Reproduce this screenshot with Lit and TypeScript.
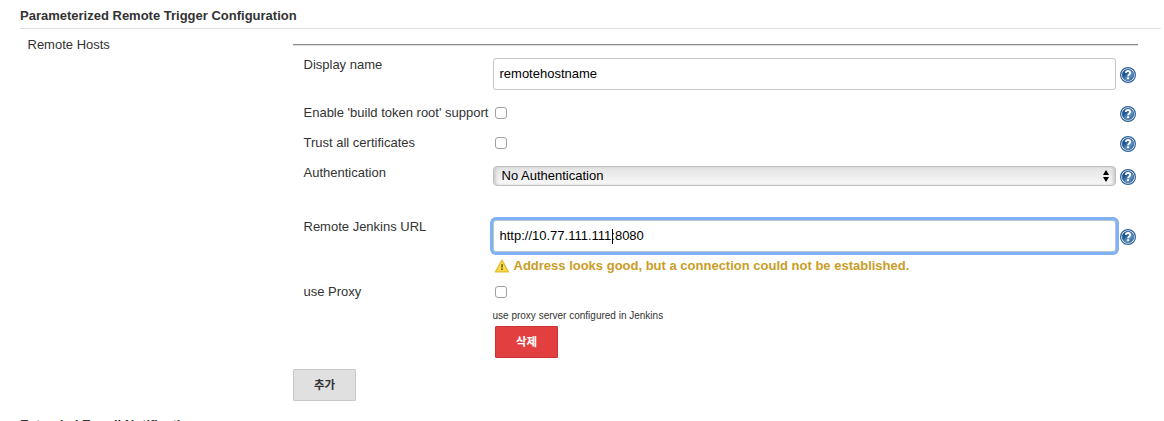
import { LitElement, html, css } from "lit";
import { customElement, property } from "lit/decorators.js";

@customElement("help-icon")
export class HelpIcon extends LitElement {
  static styles = css`
    :host { display: block; width: 16px; height: 16px; }
    svg { display: block; }
  `;
  render() {
    return html`<svg width="16" height="16" viewBox="0 0 16 16" aria-label="Help">
      <defs>
        <linearGradient id="g" x1="0" y1="0" x2="1" y2="1">
          <stop offset="0" stop-color="#0d427c" />
          <stop offset=".35" stop-color="#1f5a94" />
          <stop offset=".6" stop-color="#6595c2" />
          <stop offset="1" stop-color="#1f568f" />
        </linearGradient>
      </defs>
      <circle cx="8" cy="8" r="7.400" fill="#fff" stroke="#2c629b" stroke-width="1.200" />
      <circle cx="8" cy="8" r="5.800" fill="url(#g)" stroke="#1b5089" stroke-width=".6" />
      <path d="M5.700 5.900C5.900 4.500 6.800 4 8 4c1.400 0 2.200.7 2.200 1.900C10.200 7.400 8.100 7.400 8.100 9.300" fill="none" stroke="#fff" stroke-width="1.800" />
      <rect x="7.100" y="10.300" width="2" height="1.900" fill="#fff" />
    </svg>`;
  }
}

@customElement("form-row")
export class FormRow extends LitElement {
  @property() label = "";
  @property({ type: Boolean }) help = false;
  static styles = css`
    :host { display: grid; grid-template-columns: 190px 624px 16px; column-gap: 0; }
    .label { padding-left: 0.5px; line-height: 18px; white-space: nowrap; }
    .help { padding: var(--help-top, 2px) 0 0 3px; }
  `;
  render() {
    return html`
      <div class="label">${this.label}</div>
      <div><slot></slot></div>
      <div class="help">${this.help ? html`<help-icon></help-icon>` : null}</div>
    `;
  }
}

@customElement("app-root")
export class AppRoot extends LitElement {
  static styles = css`
    :host {
      display: block; height: 421px; overflow: hidden; background: #fff; color: #333;
      font: 13px/18px "Liberation Sans", Arial, "Noto Sans CJK KR", sans-serif;
    }
    * { box-sizing: border-box; }
    .page { padding: 7px 3px 0 20px; }
    .heading { height: 22px; font-size: 13px; font-weight: bold; line-height: 18px; border-bottom: 1px solid #ddd; white-space: nowrap; }
    .section { display: grid; grid-template-columns: 273px 845px; height: 387px; }
    .section-label { padding: 7px 0 0 7.5px; }
    .host-list { padding-top: 15px; }
    .rule { height: 2px; background: linear-gradient(#8c8c8c 50%, #ddd 50%); }
    .host { padding: 10px 0 0 10px; }
    .row-name { height: 48px; --help-top: 11px; }
    .row-check { height: 30px; }
    .row-auth { height: 54px; --help-top: 5px; }
    .row-url { height: 65px; --help-top: 11px; }
    .row-proxy { height: 86px; }
    .field { display: flex; align-items: center; height: 32px; width: 623px; margin-top: 2px; padding: 0 5.5px; border: 1px solid #c4c4c4; border-radius: 3px; background: #fff; color: #000; }
    .field.focused { border-color: #b9c3ce; box-shadow: 0 0 0 3px #7fb2f5; }
    .caret { width: 1px; height: 15px; margin: 0 -2px 0 1px; background: #000; }
    .check { width: 12px; height: 12px; margin: 3px 0 0 2px; border: 1px solid #a0a0a0; border-radius: 3px; background: #fff; }
    .select { display: flex; align-items: center; justify-content: space-between; width: 623px; height: 20px; margin-top: 2px; padding: 0 6px 0 7.5px; border: 1px solid #bebebe; border-radius: 4px; background: linear-gradient(#e3e3e3, #f8f8f8); box-shadow: inset 3px 0 3px -1px #ccc, inset -3px 0 3px -1px #ccc; color: #000; }
    .warning { display: flex; align-items: center; gap: 4px; margin: 5px 0 0 0.5px; color: #c99d27; font-weight: bold; white-space: nowrap; }
    .hint { margin: 11px 0 0 -0.5px; font-size: 10px; line-height: 14px; }
    .button { display: flex; align-items: center; justify-content: center; width: 63px; height: 32px; padding-bottom: 2px; border: 1px solid #c8c8c8; border-radius: 1px; background: #e0e0e0; color: #333; font-family: "Noto Sans CJK KR", sans-serif; font-size: 11.5px; font-weight: bold; }
    .delete { margin: 3px 0 0 2px; border-color: #c33; background: #e24040; color: #fff; }
  `;

  render() {
    return html`
      <div class="page">
        <div class="heading">Parameterized Remote Trigger Configuration</div>
        <div class="section">
          <div class="section-label">Remote Hosts</div>
          <div class="host-list">
            <div class="rule"></div>
            <div class="host">
              <form-row class="row-name" label="Display name" help>
                <div class="field">remotehostname</div>
              </form-row>
              <form-row class="row-check" label="Enable 'build token root' support" help>
                <div class="check"></div>
              </form-row>
              <form-row class="row-check" label="Trust all certificates" help>
                <div class="check"></div>
              </form-row>
              <form-row class="row-auth" label="Authentication" help>
                <div class="select">
                  <span class="value">No Authentication</span>
                  <svg width="6" height="12" viewBox="0 0 6 12"><path d="M3 0l3 5H0zM3 12L0 7h6z" /></svg>
                </div>
              </form-row>
              <form-row class="row-url" label="Remote Jenkins URL" help>
                <div class="field focused"><span class="url">http://10.77.111.111</span><i class="caret"></i><span class="port">:8080</span></div>
                <div class="warning">
                  <svg width="16" height="14" viewBox="0 0 16 14">
                    <path d="M8 1L14.300 12.900H1.400z" fill="#fbdc48" stroke="#e6bd30" stroke-width="1.300" stroke-linejoin="round" />
                    <path d="M7.200 5.200h1.700l-.3 3.600H7.500zM7.200 9.600h1.600v1.500H7.200z" fill="#5a4d1c" />
                  </svg>
                  <span class="message">Address looks good, but a connection could not be established.</span>
                </div>
              </form-row>
              <form-row class="row-proxy" label="use Proxy">
                <div class="check"></div>
                <div class="hint">use proxy server configured in Jenkins</div>
                <div class="button delete">삭제</div>
              </form-row>
            </div>
            <div class="button">추가</div>
          </div>
        </div>
        <div class="heading">Extended E-mail Notification</div>
      </div>
    `;
  }
}
